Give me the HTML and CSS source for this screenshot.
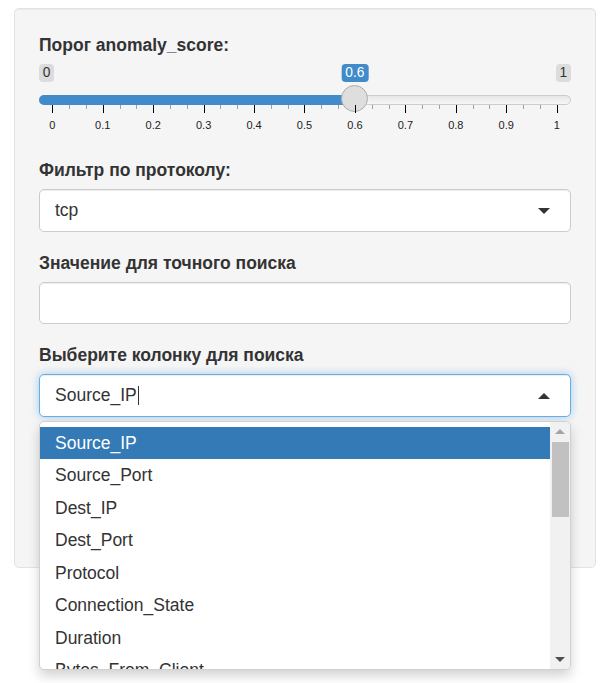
FILE: index.html
```html
<!DOCTYPE html>
<html lang="ru">
<head>
<meta charset="utf-8">
<title>Sidebar</title>
<link rel="stylesheet" href="styles.css">
</head>
<body>
<div class="page">
  <div class="well">
    <div class="form-group">
      <label class="control-label">Порог anomaly_score:</label>
      <div class="irs">
        <span class="irs-min">0</span>
        <span class="irs-max">1</span>
        <span class="irs-line"></span>
        <span class="irs-bar"></span>
        <span class="irs-single">0.6</span>
        <span class="irs-handle"></span>
        <div class="irs-grid">
          <span class="tick major" style="left:0%"></span>
          <span class="tick" style="left:3.3333%"></span>
          <span class="tick" style="left:6.6667%"></span>
          <span class="tick major" style="left:10%"></span>
          <span class="tick" style="left:13.3333%"></span>
          <span class="tick" style="left:16.6667%"></span>
          <span class="tick major" style="left:20%"></span>
          <span class="tick" style="left:23.3333%"></span>
          <span class="tick" style="left:26.6667%"></span>
          <span class="tick major" style="left:30%"></span>
          <span class="tick" style="left:33.3333%"></span>
          <span class="tick" style="left:36.6667%"></span>
          <span class="tick major" style="left:40%"></span>
          <span class="tick" style="left:43.3333%"></span>
          <span class="tick" style="left:46.6667%"></span>
          <span class="tick major" style="left:50%"></span>
          <span class="tick" style="left:53.3333%"></span>
          <span class="tick" style="left:56.6667%"></span>
          <span class="tick major" style="left:60%"></span>
          <span class="tick" style="left:63.3333%"></span>
          <span class="tick" style="left:66.6667%"></span>
          <span class="tick major" style="left:70%"></span>
          <span class="tick" style="left:73.3333%"></span>
          <span class="tick" style="left:76.6667%"></span>
          <span class="tick major" style="left:80%"></span>
          <span class="tick" style="left:83.3333%"></span>
          <span class="tick" style="left:86.6667%"></span>
          <span class="tick major" style="left:90%"></span>
          <span class="tick" style="left:93.3333%"></span>
          <span class="tick" style="left:96.6667%"></span>
          <span class="tick major" style="left:100%"></span>
          <span class="grid-text" style="left:0%">0</span>
          <span class="grid-text" style="left:10%">0.1</span>
          <span class="grid-text" style="left:20%">0.2</span>
          <span class="grid-text" style="left:30%">0.3</span>
          <span class="grid-text" style="left:40%">0.4</span>
          <span class="grid-text" style="left:50%">0.5</span>
          <span class="grid-text" style="left:60%">0.6</span>
          <span class="grid-text" style="left:70%">0.7</span>
          <span class="grid-text" style="left:80%">0.8</span>
          <span class="grid-text" style="left:90%">0.9</span>
          <span class="grid-text" style="left:100%">1</span>
        </div>
      </div>
    </div>

    <div class="form-group">
      <label class="control-label">Фильтр по протоколу:</label>
      <div class="selectize-input">
        <span class="item">tcp</span>
        <span class="arrow arrow-down"></span>
      </div>
    </div>

    <div class="form-group">
      <label class="control-label">Значение для точного поиска</label>
      <input class="form-control" type="text">
    </div>

    <div class="form-group">
      <label class="control-label">Выберите колонку для поиска</label>
      <div class="selectize">
        <div class="selectize-input focus">
          <span class="item">Source_IP</span><span class="text-caret"></span>
          <span class="arrow arrow-up"></span>
        </div>
        <div class="dropdown">
          <div class="options">
            <div class="option active">Source_IP</div>
            <div class="option">Source_Port</div>
            <div class="option">Dest_IP</div>
            <div class="option">Dest_Port</div>
            <div class="option">Protocol</div>
            <div class="option">Connection_State</div>
            <div class="option">Duration</div>
            <div class="option">Bytes_From_Client</div>
          </div>
          <div class="scrollbar">
            <div class="sb-btn"><span class="sb-up"></span></div>
            <div class="sb-thumb"></div>
            <div class="sb-fill"></div>
            <div class="sb-btn"><span class="sb-down"></span></div>
          </div>
        </div>
      </div>
    </div>
    <div class="spacer"></div>
  </div>
</div>
</body>
</html>
```

FILE: styles.css
```css
* { box-sizing: border-box; }

html, body {
  margin: 0;
  padding: 0;
  background: #fff;
  min-height: 100%;
}

body {
  font-family: "Liberation Sans", Arial, sans-serif;
  font-size: 17.5px;
  line-height: 25px;
  color: #333;
}

.page {
  padding: 8px 14px 0 14px;
  min-height: 683px;
}

.well {
  position: relative;
  background: #f5f5f5;
  border: 1px solid #e3e3e3;
  border-radius: 5px;
  box-shadow: inset 0 1px 1px rgba(0,0,0,0.05);
  padding: 24px;
}

.form-group {
  margin-bottom: 18.75px;
}

.control-label {
  display: block;
  font-weight: bold;
  font-size: 17.5px;
  line-height: 25px;
  margin-bottom: 6.25px;
  color: #333;
}

/* ---------- range slider ---------- */
.irs {
  position: relative;
  height: 75px;
}

.irs-min, .irs-max, .irs-single {
  position: absolute;
  top: 0;
  font-size: 13.75px;
  line-height: 18px;
  padding: 0 3.75px;
  border-radius: 3.75px;
}

.irs-min, .irs-max {
  background: rgba(0,0,0,0.1);
  color: #333;
}

.irs-min { left: 0; }
.irs-max { right: 0; }

.irs-single {
  left: 315.9px;
  transform: translateX(-50%);
  background: #428bca;
  color: #fff;
}

.irs-line {
  position: absolute;
  top: 31px;
  left: 0;
  right: 0;
  height: 10px;
  border: 1px solid #cccccc;
  border-radius: 10px;
  background: linear-gradient(to bottom, #dedede -50%, #ffffff 150%);
}

.irs-bar {
  position: absolute;
  top: 31px;
  left: 0;
  width: 316px;
  height: 10px;
  background: #428bca;
  border-radius: 10px 0 0 10px;
}

.irs-handle {
  position: absolute;
  top: 21px;
  left: 302.4px;
  width: 27px;
  height: 27px;
  border-radius: 50%;
  background: #dedede;
  border: 1px solid #ababab;
  box-shadow: 1px 1px 3px rgba(255,255,255,0.3);
}

.irs-grid {
  position: absolute;
  top: 41px;
  left: 13.3px;
  width: 504.4px;
  height: 34px;
}

.tick {
  position: absolute;
  top: 0;
  width: 1px;
  height: 4px;
  background: #a0a0a0;
}

.tick.major {
  height: 8px;
  background: #000;
}

.grid-text {
  position: absolute;
  top: 14px;
  transform: translateX(-50%);
  font-size: 11px;
  line-height: 13px;
  color: #222;
  white-space: nowrap;
}

/* ---------- selectize / inputs ---------- */
.selectize {
  position: relative;
  z-index: 5;
}

.selectize-input {
  display: flex;
  align-items: center;
  height: 42.5px;
  padding: 0 20px 0 15px;
  background: #fff;
  border: 1px solid #ccc;
  border-radius: 5px;
  box-shadow: inset 0 1px 1px rgba(0,0,0,0.075);
  color: #333;
  font-size: 17.5px;
}

.selectize-input.focus {
  border-color: #66afe9;
  box-shadow: inset 0 1px 1px rgba(0,0,0,0.075), 0 0 8px rgba(102,175,233,0.6);
}

.text-caret {
  display: inline-block;
  width: 1px;
  height: 19px;
  margin-left: 1px;
  background: #333;
}

.arrow {
  margin-left: auto;
  width: 0;
  height: 0;
  border-left: 6.25px solid transparent;
  border-right: 6.25px solid transparent;
}

.arrow-down {
  border-top: 6.25px solid #333;
}

.arrow-up {
  border-bottom: 6.25px solid #333;
}

.form-control {
  display: block;
  width: 100%;
  height: 42.5px;
  padding: 0 15px;
  margin: 0;
  font-family: inherit;
  font-size: 17.5px;
  color: #555;
  background: #fff;
  border: 1px solid #ccc;
  border-radius: 5px;
  box-shadow: inset 0 1px 1px rgba(0,0,0,0.075);
  outline: none;
}

.dropdown {
  position: absolute;
  top: calc(100% + 4px);
  left: 0;
  right: 0;
  height: 249px;
  display: flex;
  background: #fff;
  border: 1px solid #d0d0d0;
  border-radius: 5px;
  box-shadow: 0 6px 12px rgba(0,0,0,0.175);
  overflow: hidden;
  z-index: 10;
}

.options {
  flex: 1;
  padding-top: 5px;
  overflow: hidden;
}

.option {
  padding: 3.75px 15px;
  line-height: 25px;
  color: #333;
  white-space: nowrap;
}

.option.active {
  background: #337ab7;
  color: #fff;
}

.scrollbar {
  width: 20px;
  display: flex;
  flex-direction: column;
  background: #f1f1f1;
}

.sb-btn {
  height: 19px;
  display: flex;
  align-items: center;
  justify-content: center;
}

.sb-up, .sb-down {
  width: 0;
  height: 0;
  border-left: 5px solid transparent;
  border-right: 5px solid transparent;
}

.sb-up { border-bottom: 5px solid #a3a3a3; }
.sb-down { border-top: 5px solid #505050; }

.sb-thumb {
  height: 75px;
  margin: 1px 1.5px 0 1.5px;
  background: #c1c1c1;
}

.sb-fill { flex: 1; }

.spacer {
  height: 107.5px;
}
```
